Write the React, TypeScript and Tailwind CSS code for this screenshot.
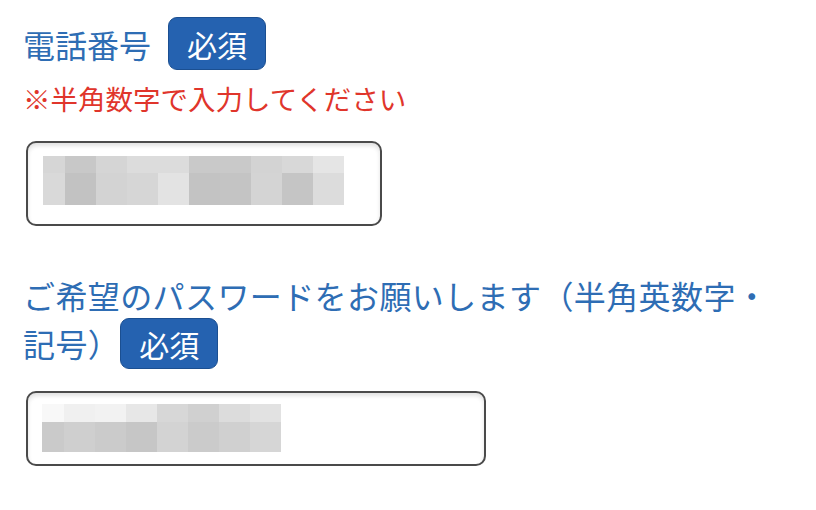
const phoneRows = [
  {
    h: "h-[17px]",
    cells: ["bg-[#d6d6d6]", "bg-[#c8c8c8]", "bg-[#d5d5d5]", "bg-[#dcdcdc]", "bg-[#dcdcdc]", "bg-[#c9c9c9]", "bg-[#c9c9c9]", "bg-[#d3d3d3]", "bg-[#d8d8d8]", "bg-[#e5e5e5]"],
  },
  {
    h: "h-[32px]",
    cells: ["bg-[#d9d9d9]", "bg-[#c2c2c2]", "bg-[#d3d3d3]", "bg-[#d6d6d6]", "bg-[#e3e3e3]", "bg-[#c3c3c3]", "bg-[#c4c4c4]", "bg-[#d4d4d4]", "bg-[#c5c5c5]", "bg-[#dcdcdc]"],
  },
]

const passRows = [
  {
    h: "h-[18px]",
    cells: ["bg-[#f8f8f8]", "bg-[#f0f0f0]", "bg-[#f2f2f2]", "bg-[#e7e7e7]", "bg-[#d7d7d7]", "bg-[#d0d0d0]", "bg-[#dcdcdc]", "bg-[#e2e2e2]"],
  },
  {
    h: "h-[30px]",
    cells: ["bg-[#cacaca]", "bg-[#cfcfcf]", "bg-[#cbcbcb]", "bg-[#c6c6c6]", "bg-[#d3d3d3]", "bg-[#cbcbcb]", "bg-[#d0d0d0]", "bg-[#d6d6d6]"],
  },
]

function Mosaic({ rows }: { rows: { h: string; cells: string[] }[] }) {
  return (
    <div className="flex flex-col">
      {rows.map((row, i) => (
        <div key={i} className={`flex ${row.h}`}>
          {row.cells.map((c, j) => (
            <div key={j} className={`${c} ${j === 0 ? "w-[22px]" : "w-[31px]"}`} />
          ))}
        </div>
      ))}
    </div>
  )
}

function Badge({ className = "" }: { className?: string }) {
  return (
    <span
      className={`inline-flex items-center justify-center w-[98px] rounded-[9px] bg-[#2562b0] border border-[#1b4f91] text-white text-[30px] leading-none tracking-normal ${className}`}
    >
      必須
    </span>
  )
}

export default function App() {
  return (
    <div
      className="min-h-[510px] w-[816px] bg-white pl-[23px] pt-[17px]"
      style={{ fontFamily: '"Noto Sans CJK JP", "Noto Sans", sans-serif' }}
    >
      <div className="flex items-center h-[53px] gap-[17px]">
        <span className="text-[32px] text-[#2e6db4] leading-none">電話番号</span>
        <Badge className="h-[53px]" />
      </div>

      <p className="mt-[8px] text-[27.5px] leading-[40px] text-[#e0352b]">※半角数字で入力してください</p>

      <div className="mt-[23px] ml-[3px] w-[356px] h-[85px] rounded-[10px] border-2 border-[#4a4a4a] bg-white shadow-[inset_0_3px_4px_rgba(0,0,0,0.12)] pl-[15px] pt-[13px]">
        <Mosaic rows={phoneRows} />
      </div>

      <p className="mt-[45px] w-[755px] text-[32px] leading-[48px] tracking-[0.4px] text-[#2e6db4]">
        ご希望のパスワードをお願いします（半角英数字・記号）
        <Badge className="h-[51px] align-top mt-[-1px] mb-[-6px]" />
      </p>

      <div className="mt-[24px] ml-[3px] w-[460px] h-[75px] rounded-[10px] border-2 border-[#4a4a4a] bg-white shadow-[inset_0_3px_4px_rgba(0,0,0,0.12)] pl-[14px] pt-[11px]">
        <Mosaic rows={passRows} />
      </div>
    </div>
  )
}
